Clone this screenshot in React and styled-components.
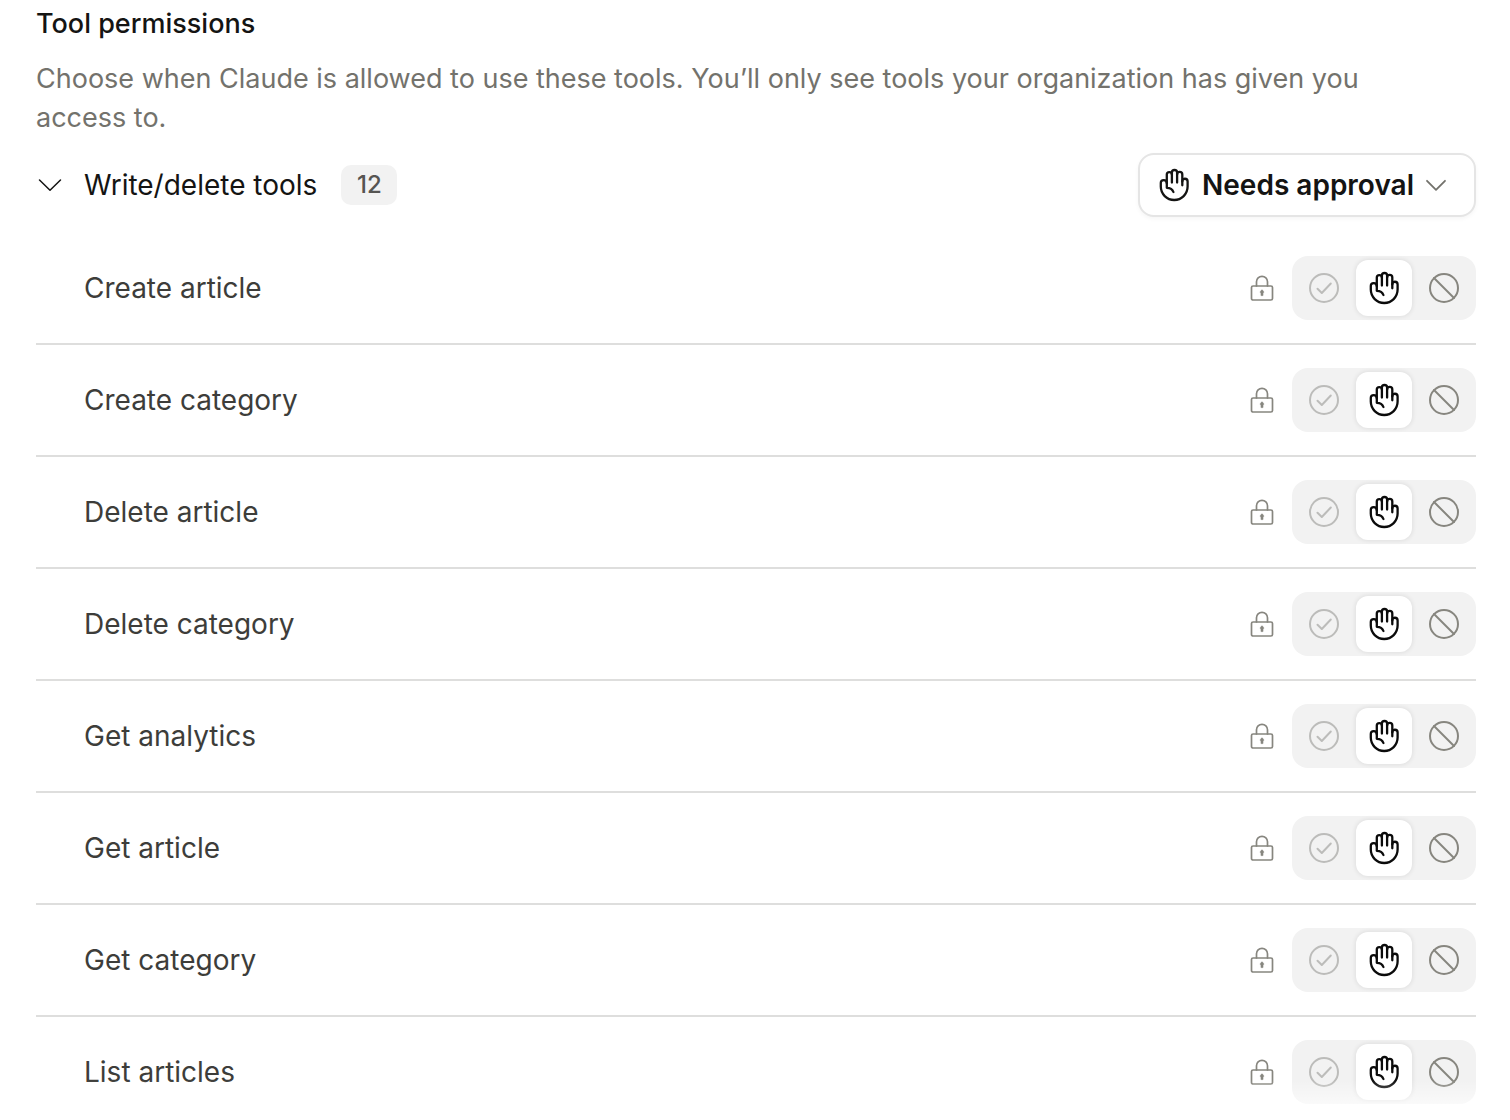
import { useState } from "react";
import styled, { createGlobalStyle } from "styled-components";

const GlobalStyle = createGlobalStyle`
  * {
    box-sizing: border-box;
  }
  body {
    margin: 0;
    background: #ffffff;
    color: #141413;
    font-family: Inter, "Liberation Sans", sans-serif;
  }
  button {
    font: inherit;
    color: inherit;
    border: none;
    background: none;
    padding: 0;
    cursor: pointer;
  }
`;

const Page = styled.main`
  padding: 4px 34px 0 36px;
`;

const Title = styled.h1`
  margin: 0;
  font-size: 27px;
  line-height: 40px;
  font-weight: 500;
`;

const Description = styled.p`
  margin: 15px 0 0;
  padding-right: 48px;
  font-size: 27px;
  line-height: 39px;
  color: #73726c;
`;

const GroupHeader = styled.div`
  display: flex;
  align-items: center;
  justify-content: space-between;
  margin-top: 16px;
`;

const GroupToggle = styled.button`
  display: flex;
  align-items: center;
  gap: 20px;
  font-size: 28px;
  line-height: 40px;
`;

const GroupName = styled.span`
  display: flex;
  align-items: center;
  gap: 24px;
`;

const Count = styled.span`
  min-width: 56px;
  padding: 0 12px;
  border-radius: 10px;
  background: #f2f2f2;
  color: #565552;
  font-size: 24px;
  line-height: 40px;
  font-weight: 500;
  text-align: center;
`;

const PolicyButton = styled.button`
  && {
    display: flex;
    align-items: center;
    height: 64px;
    padding: 0 20px 0 14px;
    border: 2px solid #e5e5e5;
    border-radius: 16px;
    background: #ffffff;
    box-shadow: 0 2px 4px rgba(0, 0, 0, 0.04);
    font-size: 28px;
    font-weight: 600;
  }
`;

const PolicyLabel = styled.span`
  margin: 0 4px 0 8px;
`;

const ListWrapper = styled.div`
  position: relative;
  margin-top: 16px;
`;

const List = styled.ul`
  margin: 0;
  padding: 0;
  list-style: none;
`;

const Row = styled.li`
  display: flex;
  align-items: center;
  padding: 23px 0 23px 48px;

  &:not(:last-child) {
    border-bottom: 2px solid #dededd;
  }
  &:last-child {
    padding-bottom: 0;
  }
`;

const ToolName = styled.span`
  flex: 1;
  font-size: 28px;
  line-height: 40px;
  color: #3d3d3a;
`;

const Segments = styled.div`
  display: flex;
  gap: 4px;
  margin-left: 14px;
  padding: 4px;
  border-radius: 16px;
  background: #f2f2f2;
`;

const Segment = styled.button`
  && {
    display: flex;
    align-items: center;
    justify-content: center;
    width: 56px;
    height: 56px;
    border-radius: 12px;
    color: ${(props) => (props.$active ? "#0b0b0b" : "#87867f")};
    background: ${(props) => (props.$active ? "#ffffff" : "transparent")};
    box-shadow: ${(props) => (props.$active ? "0 0 4px 1px rgba(0, 0, 0, 0.08)" : "none")};
  }
  &&:disabled {
    color: #bcbcba;
    cursor: default;
  }
`;

const Fade = styled.div`
  position: absolute;
  left: 0;
  right: 0;
  bottom: -16px;
  height: 40px;
  background: linear-gradient(to bottom, rgba(255, 255, 255, 0), #ffffff);
  pointer-events: none;
`;

const Icon = styled.svg`
  display: block;
  flex: none;
  fill: none;
  stroke: currentColor;
  stroke-linecap: round;
  stroke-linejoin: round;
`;

const LockIcon = styled(Icon)`
  color: #87867f;
`;

const MutedIcon = styled(Icon)`
  color: #73726c;
`;

function Hand() {
  return (
    <Icon width="40" height="40" viewBox="0 0 40 40" strokeWidth="2.3" aria-hidden="true">
      {/* palm with the thumb and little finger */}
      <path d="M12.8 18.2c0-2-1.2-3.1-3.1-3.1-2 0-2.9 1.1-2.9 3V21.6a13.4 13.4 0 0 0 26.8 0V16.4a2.6 2.6 0 0 0-5.3 0" />
      <path d="M17.9 17.6V9.6a2.5 2.5 0 0 0-5.1 0V22.8c3.2 0 5.6 1.3 6.6 4.2" />
      <path d="M17.9 9.4V7.6a2.6 2.6 0 0 1 5.2 0V17.6" />
      <path d="M23.1 9.4a2.6 2.6 0 0 1 5.2 0V20.3" />
    </Icon>
  );
}

function CheckCircle() {
  return (
    <Icon width="40" height="40" viewBox="0 0 40 40" strokeWidth="2" aria-hidden="true">
      <circle cx="20" cy="20" r="14" />
      <path d="M13.5 20.8 17.8 25 26.8 15.5" />
    </Icon>
  );
}

function Blocked() {
  return (
    <Icon width="40" height="40" viewBox="0 0 40 40" strokeWidth="2" aria-hidden="true">
      <circle cx="20" cy="20" r="14" />
      <path d="M10 10 30 30" />
    </Icon>
  );
}

function Lock() {
  return (
    <LockIcon width="32" height="32" viewBox="0 0 32 32" strokeWidth="1.7" role="img" aria-label="Locked">
      <rect x="5.5" y="14" width="21" height="14" rx="1.6" />
      <path d="M10.5 14V9.8a5.5 5.5 0 0 1 11 0V14" />
      <path d="M16 18.2a1.8 1.8 0 0 1 1 3.2v2.2h-2v-2.2a1.8 1.8 0 0 1 1-3.2Z" fill="currentColor" strokeWidth="0.6" />
    </LockIcon>
  );
}

const tools = [
  "Create article",
  "Create category",
  "Delete article",
  "Delete category",
  "Get analytics",
  "Get article",
  "Get category",
  "List articles",
];

function ToolRow({ name }) {
  const [permission, setPermission] = useState("ask");

  return (
    <Row>
      <ToolName>{name}</ToolName>
      <Lock />
      <Segments role="group" aria-label={name}>
        <Segment type="button" aria-label="Always allow" disabled>
          <CheckCircle />
        </Segment>
        <Segment
          type="button"
          aria-label="Needs approval"
          aria-pressed={permission === "ask"}
          $active={permission === "ask"}
          onClick={() => setPermission("ask")}
        >
          <Hand />
        </Segment>
        <Segment
          type="button"
          aria-label="Blocked"
          aria-pressed={permission === "blocked"}
          $active={permission === "blocked"}
          onClick={() => setPermission("blocked")}
        >
          <Blocked />
        </Segment>
      </Segments>
    </Row>
  );
}

function App() {
  const [open, setOpen] = useState(true);

  return (
    <Page>
      <GlobalStyle />
      <Title>Tool permissions</Title>
      <Description>
        Choose when Claude is allowed to use these tools. You’ll only see tools your organization has given you
        access to.
      </Description>
      <GroupHeader>
        <GroupToggle type="button" aria-expanded={open} onClick={() => setOpen(!open)}>
          <Icon width="28" height="28" viewBox="0 0 28 28" strokeWidth="1.5" aria-hidden="true">
            <path d="M3.5 9 14 19.3 24.5 9" />
          </Icon>
          <GroupName>
            Write/delete tools
            <Count>12</Count>
          </GroupName>
        </GroupToggle>
        <PolicyButton type="button" aria-haspopup="menu">
          <Hand />
          <PolicyLabel>Needs approval</PolicyLabel>
          <MutedIcon width="36" height="36" viewBox="0 0 36 36" strokeWidth="1.8" aria-hidden="true">
            <path d="M9 13.8 18 22.8 27 13.8" />
          </MutedIcon>
        </PolicyButton>
      </GroupHeader>
      {open && (
        <ListWrapper>
          <List>
            {tools.map((name) => (
              <ToolRow key={name} name={name} />
            ))}
          </List>
          <Fade />
        </ListWrapper>
      )}
    </Page>
  );
}

export default App;
